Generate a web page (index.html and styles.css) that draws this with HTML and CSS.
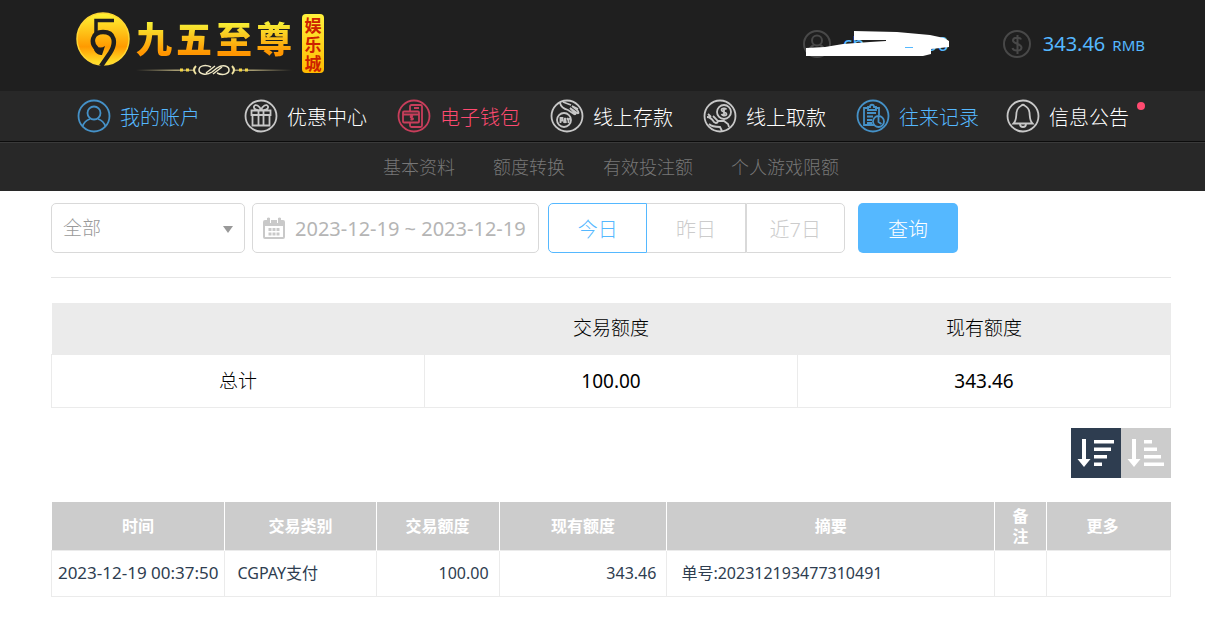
FILE: index.html
```html
<!DOCTYPE html>
<html lang="zh-CN">
<head>
<meta charset="utf-8">
<meta name="viewport" content="width=device-width, initial-scale=1">
<title>往来记录</title>
<link rel="stylesheet" href="styles.css">
</head>
<body>
<header class="top">
  <a class="logo" href="#">
    <svg class="logo-mark" viewBox="0 0 54 54" aria-hidden="true">
      <defs><linearGradient id="gold" x1="0" y1="0" x2="0" y2="1"><stop offset="0" stop-color="#fff535"/><stop offset=".65" stop-color="#ff9a00"/><stop offset="1" stop-color="#ffe92e"/></linearGradient></defs>
      <circle cx="27" cy="27" r="26" fill="url(#gold)" stroke="#ffd633" stroke-width="1.5"/>
      <path d="M38 8.500H20V21" fill="none" stroke="#1f1f1f" stroke-width="3.500"/>
      <path d="M21 37C14 31 16 20 27 20c12 0 13.500 11 7 21L25 54" fill="none" stroke="#1f1f1f" stroke-width="4.500"/>
      <path d="M20 34c3 2 6 2 9 0l-3 9c-3 0-6-1-8-5z" fill="#1f1f1f"/>
    </svg>
    <span class="logo-name">
      <span class="logo-chars"><span>九</span><span>五</span><span>至</span><span>尊</span></span>
      <svg class="flourish" viewBox="0 0 156 12" aria-hidden="true">
        <defs><linearGradient id="line" x1="0" x2="1"><stop offset="0" stop-color="#8d8462" stop-opacity="0"/><stop offset=".25" stop-color="#a59b72"/><stop offset=".75" stop-color="#a59b72"/><stop offset="1" stop-color="#8d8462" stop-opacity="0"/></linearGradient></defs>
        <path d="M0 5.500h58v1.500H0zM98 5.500h58v1.500H98z" fill="url(#line)"/>
        <path d="M44 6h3M50 6h3M103 6h3M109 6h3" stroke="#f2d64b" stroke-width="3"/>
        <path d="M60 2q-4 4 0 8M96 2q4 4 0 8" fill="none" stroke="#efe2a0" stroke-width="2"/>
        <path d="M75 3c-6-3-12-1-12 3s7 6 13 2l5-4c6-4 12-2 12 2s-6 6-12 3M70 9l9-7M77 10l9-7" fill="none" stroke="#efe8c4" stroke-width="1.500"/>
      </svg>
    </span>
    <span class="logo-badge">娱乐城</span>
  </a>
  <div class="account">
    <div class="account-item">
      <svg class="account-icon" viewBox="0 0 28 28" aria-hidden="true"><circle cx="14" cy="14" r="13"/><circle cx="14" cy="10.500" r="5"/><path d="M5 23c1-5 4-7 6-8M23 23c-1-5-4-7-6-8"/></svg>
      <span class="user-name"><span>ch</span><span>g</span><span>00</span></span>
      <svg class="mask" viewBox="0 0 143 25" aria-hidden="true"><path fill="#fff" d="M48 0 91 1 124 4 138 7 143 10V16L125 18V23L117 25H0V17L19 16 37 13 64 11 80 10V9H48z"/><path fill="#55b8ff" d="M99 16h8v1h-8z"/></svg>
    </div>
    <div class="account-item">
      <svg class="account-icon" viewBox="0 0 28 28" aria-hidden="true"><circle cx="14" cy="14" r="13"/><path d="M18 9.500C17 7 10 7 10 10.500s8.500 3 8.500 7-8 4-9 .500M14.500 5v19"/></svg>
      <span class="money"><span>343.46</span><small>RMB</small></span>
    </div>
  </div>
</header>
<nav class="main-nav" aria-label="主导航">
  <a class="blue wide" href="#"><svg viewBox="0 0 34 34" aria-hidden="true"><circle cx="17" cy="17" r="15.500"/><circle cx="17" cy="14" r="6.500"/><path d="M5.500 27.500C7 23 10 21 13 20M28.500 27.500C27 23 24 21 21 20"/></svg>我的账户</a>
  <a href="#"><svg viewBox="0 0 34 34" aria-hidden="true"><circle cx="17" cy="17" r="15.500"/><path d="M7.500 11.500h19V16h-19zM8.500 16v10.500h17V16M14.500 11.500v15M19.500 11.500v15M17 11.500c-3 0-8-1-7-4s6-1 7 4c1-5 6-7 7-4s-4 4-7 4"/></svg>优惠中心</a>
  <a class="pink" href="#"><svg viewBox="0 0 34 34" aria-hidden="true"><circle cx="17" cy="17" r="15.500"/><path d="M13 12V7.500q0-1.500 1.500-1.500h9q1.500 0 1.500 1.500v19q0 1.500-1.500 1.500h-9Q13 28 13 26.500V24M17 9h5M6 13.500q0-1 1-1h14q1 0 1 1v9q0 1-1 1H7q-1 0-1-1zM6 15.500h16M16 17.500c-3-1-3 1-1 1.500s1 2-1.500 1M14.500 16.500v5"/></svg>电子钱包</a>
  <a href="#"><svg viewBox="0 0 34 34" aria-hidden="true"><circle cx="17" cy="17" r="15.500"/><circle cx="14" cy="21" r="7"/><path d="M10 4c1 4 4 6 8 7l6 4c2 1 2-1 0-2l-4-4 7 5c2 1 2-1 0-3l-5-4 6 3M13 3l8 3M10.500 24v-5h2v2.500h-2M14 24l1-5 1 5M17 19l1.500 2.500 1-2.500M18.500 21v3"/></svg>线上存款</a>
  <a href="#"><svg viewBox="0 0 34 34" aria-hidden="true"><circle cx="17" cy="17" r="15.500"/><circle cx="21" cy="13" r="7"/><path d="M23.500 10.500c-1-1.500-5-1.500-5 .500s5 2 5 4-4 2-5 0M21 8.500v9M4 18c3 0 5 2 7 5l2 1c2 0 2-1 1-3l-4-4M8 18l-3-3M14 22h7l4 3 1 3M6 25c3 3 7 3 11 3l2 4"/></svg>线上取款</a>
  <a class="blue" href="#"><svg viewBox="0 0 34 34" aria-hidden="true"><circle cx="17" cy="17" r="15.500"/><path d="M13 9H8v17h10M19 9h4v7M12 8h2c0-3 4-3 4 0h2v3h-8zM11 14h9M11 17.500h6M11 21h5M11 24h5M22.500 18v5l3 2"/><circle cx="22.500" cy="22.500" r="5.500"/></svg>往来记录</a>
  <a class="notice" href="#"><svg viewBox="0 0 34 34" aria-hidden="true"><circle cx="17" cy="17" r="15.500"/><path d="M7.500 24.500c3-3 2.500-6 3-11 .5-4 3-6 5-7q1.500-1.500 3 0c2 1 4.500 3 5 7 .5 5 0 8 3 11zM14 25c0 4 6 4 6 0"/></svg>信息公告</a>
</nav>
<nav class="sub-nav" aria-label="子导航">
  <a href="#">基本资料</a><a href="#">额度转换</a><a href="#">有效投注额</a><a href="#">个人游戏限额</a>
</nav>
<main class="content">
  <form class="filters">
    <span class="select-box">
      <select aria-label="交易类别"><option>全部</option></select>
    </span>
    <label class="date-box">
      <svg viewBox="0 0 22 22" aria-hidden="true"><path fill="#c9c9c9" d="M2 3h2v3h4V3h6v3h4V3h2q2 0 2 2v15q0 2-2 2H2q-2 0-2-2V5q0-2 2-2z"/><path fill="#fff" d="M2 9h18v11H2z"/><path fill="#c9c9c9" d="M4 1q1.500-1 3 0v5H4zM15 1q1.500-1 3 0v5h-3zM5.500 11h3v3h-3zM9.500 11h3v3h-3zM13.500 11h3v3h-3zM5.500 15.500h3v3h-3zM9.500 15.500h3v3h-3zM13.500 15.500h3v3h-3z"/></svg>
      <input type="text" aria-label="日期范围" value="2023-12-19 ~ 2023-12-19">
    </label>
    <div class="ranges">
      <button class="active" type="button">今日</button><button type="button">昨日</button><button type="button">近7日</button>
    </div>
    <button class="query" type="button">查询</button>
  </form>
  <table class="summary">
    <thead><tr><td></td><th scope="col">交易额度</th><th scope="col">现有额度</th></tr></thead>
    <tbody><tr><th scope="row">总计</th><td>100.00</td><td>343.46</td></tr></tbody>
  </table>
  <div class="sorting">
    <button class="active" type="button" aria-label="降序"><svg viewBox="0 0 50 50" aria-hidden="true"><path d="M11 11h4v20h4.500L13 39 6.500 31H11zM23 12h20v3.500H23zM23 19.500h17V23H23zM23 27h13v3.500H23zM23 34.500h8V38h-8z"/></svg></button>
    <button type="button" aria-label="升序"><svg viewBox="0 0 50 50" aria-hidden="true"><path d="M11 11h4v20h4.500L13 39 6.500 31H11zM23 12h8v3.500h-8zM23 19.500h13V23H23zM23 27h17v3.500H23zM23 34.500h20V38H23z"/></svg></button>
  </div>
  <table class="records">
    <colgroup><col class="c-time"><col class="c-type"><col class="c-amount"><col class="c-balance"><col class="c-summary"><col class="c-note"><col class="c-more"></colgroup>
    <thead><tr><th>时间</th><th>交易类别</th><th>交易额度</th><th>现有额度</th><th>摘要</th><th>备注</th><th class="more">更多</th></tr></thead>
    <tbody><tr><td class="time">2023-12-19 00:37:50</td><td>CGPAY支付</td><td class="num">100.00</td><td class="num">343.46</td><td>单号:202312193477310491</td><td></td><td></td></tr></tbody>
  </table>
</main>
</body>
</html>
```
FILE: styles.css
```css
* { box-sizing: border-box; }
body {
  margin: 0;
  background: #fff;
  color: #000;
  font-family: "Noto Sans", "Noto Sans CJK SC", sans-serif;
  font-size: 16px;
}
a { color: inherit; text-decoration: none; }
button, input, select { font: inherit; color: inherit; }
svg { display: block; flex: none; }

.top {
  display: flex;
  justify-content: space-between;
  align-items: flex-start;
  padding: 12px 60px 15px 76px;
  background: #1f1f1f;
}
.logo { display: flex; align-items: flex-start; }
.logo-mark { width: 54px; height: 54px; }
.logo-name { display: flex; flex-direction: column; padding: 5px 0 0 6px; }
.logo-chars {
  display: flex;
  gap: 4px;
  font-family: "Noto Sans CJK SC", sans-serif;
  font-size: 36px;
  font-weight: 900;
  line-height: 40px;
}
.logo-chars span {
  background: linear-gradient(#f6ee35 15%, #ff9500 90%);
  -webkit-background-clip: text;
  background-clip: text;
  color: transparent;
}
.flourish { width: 156px; height: 12px; margin-top: 7px; }
.logo-badge {
  width: 22px;
  margin: 2px 0 0 10px;
  padding: 1px;
  border-radius: 4px;
  background: linear-gradient(#fff23c, #ffb900);
  color: #cc2200;
  font-family: "Noto Sans CJK SC", sans-serif;
  font-size: 17px;
  font-weight: 700;
  line-height: 19px;
  text-align: center;
  word-break: break-all;
}
.account { display: flex; gap: 54px; padding-top: 18px; color: #55b8ff; font-size: 20px; line-height: 28px; }
.account-item { display: flex; gap: 12px; position: relative; }
.account-icon { width: 28px; height: 28px; fill: none; stroke: #484848; stroke-width: 2; }
.user-name { display: flex; justify-content: space-between; width: 106px; }
.mask { position: absolute; left: 3px; top: 1px; width: 143px; height: 25px; }
.money { display: flex; align-items: baseline; gap: 7px; }
.money small { font-size: 15px; }

.main-nav {
  display: flex;
  gap: 30px;
  padding: 8px 60px 8px 77px;
  background: #282828;
  border-bottom: 1px solid #0c0c0c;
  color: #fff;
  font-size: 20px;
  font-weight: 300;
  line-height: 30px;
  white-space: nowrap;
}
.main-nav a { display: flex; align-items: center; gap: 9px; position: relative; padding-top: 4px; }
.main-nav svg { width: 34px; height: 34px; margin-top: -4px; fill: none; stroke: #c8c8c8; stroke-width: 1.8; }
.main-nav .wide { margin-right: 14px; }
.main-nav .blue { color: #55b8ff; }
.main-nav .blue svg { stroke: #4591c7; }
.main-nav .pink { color: #ff4a70; }
.main-nav .pink svg { stroke: #c83e5b; }
.main-nav .notice { margin-left: -3px; }
.notice::after {
  content: "";
  position: absolute;
  top: 3px;
  right: -16px;
  width: 8px;
  height: 8px;
  border-radius: 50%;
  background: #ff4a70;
}
.sub-nav {
  display: flex;
  justify-content: center;
  gap: 38px;
  padding: 12px 0 12px 17px;
  border-top: 1px solid #3a3a3a;
  background: #282828;
  color: #777;
  font-size: 18px;
  font-weight: 300;
  line-height: 24px;
}

.content { padding: 12px 34px 20px 51px; }
.filters {
  display: flex;
  padding-bottom: 24px;
  border-bottom: 1px solid #e6e6e6;
  font-size: 20px;
}
.select-box { position: relative; width: 194px; margin-right: 7px; color: #999; }
.select-box select {
  width: 100%;
  height: 50px;
  padding: 0 11px;
  border: 1px solid #d9d9d9;
  border-radius: 5px;
  background: #fff;
  font-size: 19px;
  font-weight: 300;
  appearance: none;
}
.select-box::after {
  content: "";
  position: absolute;
  top: 23px;
  right: 12px;
  border: 5px solid transparent;
  border-top: 7px solid #999;
  border-bottom: 0;
  pointer-events: none;
}
.date-box {
  display: flex;
  align-items: center;
  gap: 10px;
  width: 287px;
  height: 50px;
  margin-right: 9px;
  padding: 0 5px 0 10px;
  border: 1px solid #d9d9d9;
  border-radius: 5px;
  color: #b5b5b5;
}
.date-box svg { width: 22px; height: 22px; }
.date-box input { flex: 1; min-width: 0; padding: 0; border: 0; background: none; outline: 0; }
.ranges { display: flex; width: 297px; margin-right: 13px; }
.ranges button {
  flex: 1;
  padding: 0;
  border: 1px solid #d9d9d9;
  border-left-width: 0;
  background: #fff;
  color: #ccc;
  font-weight: 300;
}
.ranges button:last-child { border-left-width: 1px; border-radius: 0 5px 5px 0; }
.ranges .active { border: 1px solid #55b8ff; border-radius: 5px 0 0 5px; color: #55b8ff; }
.query { width: 100px; height: 50px; border: 0; border-radius: 5px; background: #55b8ff; color: #fff; font-weight: 300; }

table { width: 100%; border-collapse: collapse; table-layout: fixed; }
.summary { margin-top: 25px; font-size: 19px; line-height: 26px; text-align: center; }
.summary th { font-weight: 300; }
.summary thead { background: #ebebeb; }
.summary th, .summary td { height: 51px; padding: 0; }
.summary tbody th, .summary tbody td { height: 53px; border: 1px solid #ebebeb; }

.sorting { display: flex; justify-content: flex-end; margin: 20px 0 24px; }
.sorting button { width: 50px; height: 50px; padding: 0; border: 0; background: #ccc; }
.sorting .active { background: #2e3d50; }
.sorting svg { width: 50px; height: 50px; fill: #fff; }

.records { color: #2e3d50; line-height: 20px; }
.records th { height: 48px; padding: 4px 16px; background: #ccc; color: #fff; }
.records th + th { border-left: 1px solid #fff; }
.records .more { padding-right: 28px; }
.records td { height: 46px; padding: 0 10px 0 14px; border: 1px solid #ebebeb; }
.records td:nth-child(2) { padding-left: 12px; }
.records .time { padding: 0; font-size: 17px; text-align: center; white-space: nowrap; }
.records .num { text-align: right; }
.c-time { width: 15.500%; }
.c-type { width: 13.500%; }
.c-amount { width: 11%; }
.c-balance { width: 15%; }
.c-summary { width: 29.300%; }
.c-note { width: 4.600%; }
.c-more { width: 11.100%; }
```
